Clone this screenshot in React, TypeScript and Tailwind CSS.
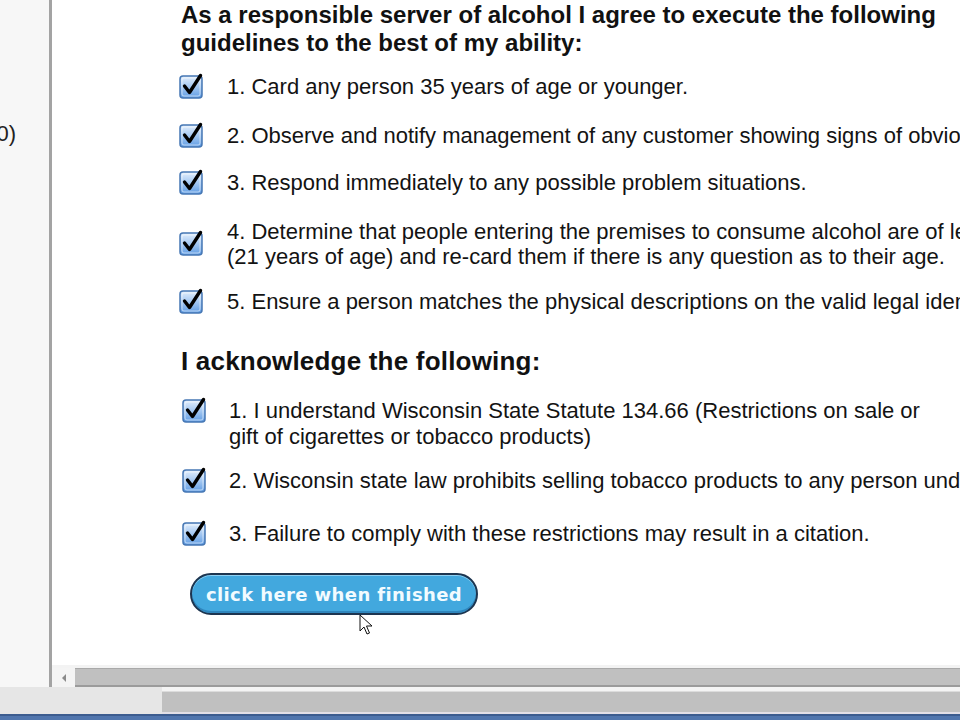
import React from "react";

function CheckIcon() {
  return (
    <svg width="26" height="28" viewBox="0 0 26 28" className="shrink-0">
      <defs>
        <linearGradient id="cbfill" x1="0" y1="0" x2="0" y2="1">
          <stop offset="0" stopColor="#e4effc" />
          <stop offset="0.45" stopColor="#a9cbf3" />
          <stop offset="1" stopColor="#5f9ce3" />
        </linearGradient>
      </defs>
      <rect x="1" y="5" width="22" height="22" rx="3" fill="url(#cbfill)" stroke="#4677b4" strokeWidth="1.5" />
      <rect x="3" y="7" width="18" height="18" rx="2" fill="none" stroke="#ffffff" strokeOpacity="0.55" strokeWidth="1" />
      <path d="M5.5 15 L10.5 21.5 L21.5 4.5" fill="none" stroke="#000" strokeWidth="3.4" strokeLinecap="round" strokeLinejoin="round" />
    </svg>
  );
}

function Cursor() {
  return (
    <svg width="14" height="22" viewBox="0 0 14 22" className="absolute left-[359px] top-[614px]">
      <path d="M1 1 L1 17 L5 13 L8 20 L10.5 19 L7.5 12 L13 12 Z" fill="#fff" stroke="#111" strokeWidth="1" strokeLinejoin="round" />
    </svg>
  );
}

const firstList: { lines: string[]; mt: string }[] = [
  { lines: ["1. Card any person 35 years of age or younger."], mt: "mt-[17px]" },
  { lines: ["2. Observe and notify management of any customer showing signs of obvious intoxication."], mt: "mt-[24px]" },
  { lines: ["3. Respond immediately to any possible problem situations."], mt: "mt-[22px]" },
  {
    lines: [
      "4. Determine that people entering the premises to consume alcohol are of legal age",
      "(21 years of age) and re-card them if there is any question as to their age.",
    ],
    mt: "mt-[24px]",
  },
  { lines: ["5. Ensure a person matches the physical descriptions on the valid legal identification."], mt: "mt-[20px]" },
];

const secondList: { lines: string[]; mt: string }[] = [
  {
    lines: [
      "1. I understand Wisconsin State Statute 134.66 (Restrictions on sale or",
      "gift of cigarettes or tobacco products)",
    ],
    mt: "mt-[23px]",
  },
  { lines: ["2. Wisconsin state law prohibits selling tobacco products to any person under the age of 18."], mt: "mt-[18px]" },
  { lines: ["3. Failure to comply with these restrictions may result in a citation."], mt: "mt-[27px]" },
];

export default function App() {
  return (
    <div className="relative w-[960px] h-[720px] overflow-hidden flex flex-col bg-white text-[#131313] font-['Liberation_Sans',Arial,sans-serif]">
      <div className="flex h-[687px]">
        {/* left frame */}
        <div className="w-[52px] shrink-0 bg-[#f7f7f7] border-r-[3px] border-[#a3a3a3] overflow-hidden">
          <div className="mt-[121px] w-[16px] flex justify-end whitespace-nowrap text-[22px] leading-[25px] text-[#222]">
            20)
          </div>
        </div>

        <div className="flex-1 min-w-0 flex flex-col">
          <div className="flex-1 min-h-0 overflow-hidden pl-[129px] pt-[1px] whitespace-nowrap">
            <h2 className="text-[24px] leading-[28px] font-bold text-[#111]">
              As a responsible server of alcohol I agree to execute the following
              <br />
              guidelines to the best of my ability:
            </h2>

            {firstList.map((item, i) => (
              <div key={i} className={`flex items-center gap-[22px] ${item.mt}`}>
                <div className={`-ml-[2px] ${item.lines.length > 1 ? "-mt-[4px]" : "-mt-[3px]"}`}>
                  <CheckIcon />
                </div>
                <p className="text-[22px] leading-[25px]">
                  {item.lines.map((l, j) => (
                    <span key={j} className="block">
                      {l}
                    </span>
                  ))}
                </p>
              </div>
            ))}

            <h2 className="mt-[33px] text-[26px] leading-[28px] font-bold tracking-[0.2px] text-[#111]">
              I acknowledge the following:
            </h2>

            {secondList.map((item, i) => (
              <div key={i} className={`flex items-start gap-[21px] ${item.mt}`}>
                <div className="ml-[1px] -mt-[3px]">
                  <CheckIcon />
                </div>
                <p className="text-[22px] leading-[26px]">
                  {item.lines.map((l, j) => (
                    <span key={j} className="block">
                      {l}
                    </span>
                  ))}
                </p>
              </div>
            ))}

            <button className="mt-[26px] ml-[9px] w-[288px] h-[42px] rounded-full bg-[#42a8de] border-2 border-[#1d3550] shadow-[inset_0_1px_0_#8fd0f2,inset_0_-2px_0_#2f86bd] flex items-center justify-center">
              <span className="font-['DejaVu_Sans',sans-serif] font-bold text-[18px] text-[#f2fbff] tracking-[0.4px]">
                click here when finished
              </span>
            </button>
          </div>

          {/* horizontal scrollbar */}
          <div className="h-[3px] bg-[#f3f3f3]" />
          <div className="h-[19px] flex">
            <div className="w-[23px] bg-[#f4f4f4] flex items-center justify-center">
              <div className="w-0 h-0 border-y-[4px] border-y-transparent border-r-[4px] border-r-[#8a8a8a]" />
            </div>
            <div className="flex-1 bg-[#c0c0c0] border-t border-t-[#a9a9a9] border-b-2 border-b-[#9b9b9b]" />
          </div>
        </div>
      </div>

      {/* lower bar */}
      <div className="h-[27px] flex">
        <div className="w-[162px] bg-[#e6e6e6]" />
        <div className="flex-1 flex flex-col">
          <div className="h-[5px] bg-[#f4f4f4] border-b border-[#dcdcdc]" />
          <div className="flex-1 bg-[#c0c0c0]" />
          <div className="h-[2px] bg-[#e2dfe6]" />
        </div>
      </div>
      <div className="h-[6px] bg-[#5075ad] border-t-2 border-[#3c5c8f]" />

      <Cursor />
    </div>
  );
}
